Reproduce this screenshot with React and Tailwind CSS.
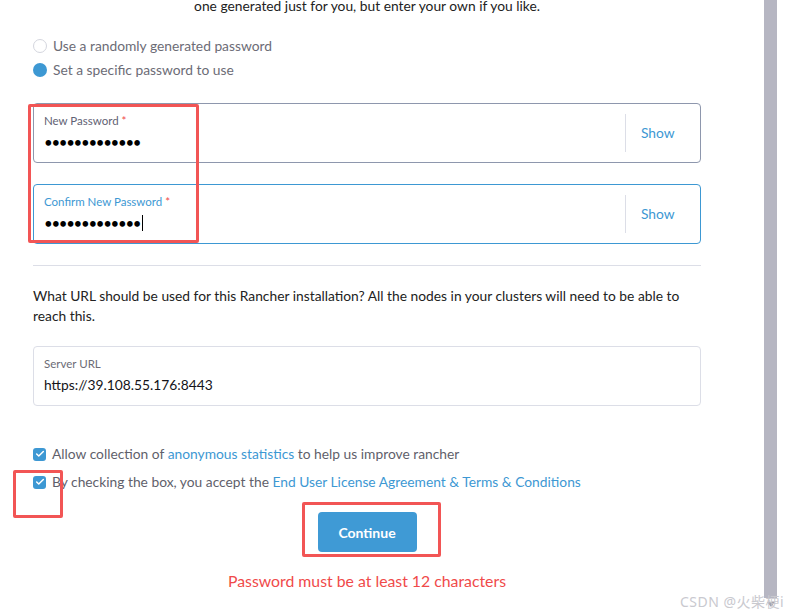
import { Check } from 'lucide-react';

const font = { fontFamily: 'Lato, "Noto Sans", sans-serif' };

function Radio({ checked, label }) {
  return (
    <div className="flex items-center gap-[6px] h-6">
      {checked ? (
        <span className="w-[14px] h-[14px] rounded-full bg-[#3d98d3]" />
      ) : (
        <span className="w-[14px] h-[14px] rounded-full border border-[#d4d6de] bg-white" />
      )}
      <span className="text-[13.8px] text-[#6c6c76]">{label}</span>
    </div>
  );
}

function Checkbox({ children }) {
  return (
    <div className="flex items-center gap-[6px] h-7">
      <span className="w-[13px] h-[13px] rounded-[3px] bg-[#3d98d3] flex items-center justify-center">
        <Check size={10} strokeWidth={3.5} className="text-white" />
      </span>
      <span className="text-[13.8px] text-[#5f5f6b]">{children}</span>
    </div>
  );
}

function PasswordField({ label, focused }) {
  return (
    <div
      className={`h-[60px] rounded-[4px] border flex items-stretch bg-white ${
        focused ? 'border-[#3d98d3]' : 'border-[#8e97ad]'
      }`}
    >
      <div className="flex-1 pl-[10px] pt-[9px] flex flex-col">
        <span className={`text-[11.5px] leading-4 ${focused ? 'text-[#3d98d3]' : 'text-[#5f6273]'}`}>
          {label} <span className="text-[#f04a4a]">*</span>
        </span>
        <div className="flex items-center h-[22px] mt-[2px]">
          <span className="text-[15px] leading-none tracking-[-1.3px] text-black">•••••••••••••</span>
          {focused && <span className="w-px h-[16px] bg-black ml-[2px]" />}
        </div>
      </div>
      <div className="flex items-center py-[10px]">
        <div className="w-px h-full bg-[#dcdee7]" />
        <span className="w-[74px] pl-[15px] text-[13.8px] text-[#3d98d3]">Show</span>
      </div>
    </div>
  );
}

export default function App() {
  return (
    <div className="w-[788px] h-[615px] overflow-hidden relative flex bg-white" style={font}>
      <div className="w-[764px] flex flex-col pl-[33px] pr-[63px]">
        <p className="h-[12px] leading-[12px] text-center text-[13.8px] text-[#222]">
          one generated just for you, but enter your own if you like.
        </p>

        <div className="mt-[22px] flex flex-col">
          <Radio label="Use a randomly generated password" />
          <Radio checked label="Set a specific password to use" />
        </div>

        <div className="mt-[21px] flex flex-col gap-[21px]">
          <PasswordField label="New Password" />
          <PasswordField label="Confirm New Password" focused />
        </div>

        <div className="mt-[21px] h-px bg-[#dcdee7]" />

        <p className="mt-[20px] text-[13.8px] leading-5 text-[#222]">
          What URL should be used for this Rancher installation? All the nodes in your clusters will need to be able to
          reach this.
        </p>

        <div className="mt-[20px] h-[60px] rounded-[4px] border border-[#dcdee7] pl-[10px] pt-[9px] flex flex-col">
          <span className="text-[11.5px] leading-4 text-[#6c6c76]">Server URL</span>
          <span className="mt-[3px] text-[13.8px] leading-5 text-[#141419]">https://39.108.55.176:8443</span>
        </div>

        <div className="mt-[34px] flex flex-col">
          <Checkbox>
            Allow collection of <span className="text-[#3d98d3]">anonymous statistics</span> to help us improve rancher
          </Checkbox>
          <Checkbox>
            By checking the box, you accept the{' '}
            <span className="text-[#3d98d3]">End User License Agreement &amp; Terms &amp; Conditions</span>
          </Checkbox>
        </div>

        <div className="mt-[16px] flex justify-center">
          <button className="w-[99px] h-[40px] rounded-[4px] bg-[#3f9ad5] text-white text-[14px] font-bold">
            Continue
          </button>
        </div>

        <p className="mt-[19px] text-center text-[15.8px] leading-5 text-[#f04a4a]">
          Password must be at least 12 characters
        </p>
      </div>

      <div className="w-[24px] flex flex-col">
        <div className="w-[13px] h-[598px] bg-[#b6b6c2]" />
        <div className="w-[13px] flex justify-center mt-[4px]">
          <span className="w-0 h-0 border-l-[4px] border-r-[4px] border-t-[5px] border-l-transparent border-r-transparent border-t-[#a0a0aa]" />
        </div>
      </div>

      {/* annotation boxes */}
      <div className="absolute left-[28px] top-[104px] w-[171px] h-[139px] border-[3px] border-[#f25555] rounded-[2px]" />
      <div className="absolute left-[13px] top-[470px] w-[50px] h-[48px] border-[3px] border-[#f25555] rounded-[2px]" />
      <div className="absolute left-[302px] top-[502px] w-[139px] h-[55px] border-[3px] border-[#f25555] rounded-[2px]" />

      <span
        className="absolute left-[680px] top-[592px] text-[14px] leading-5 tracking-[0.5px] text-[#c9c9cf]"
        style={{ fontFamily: '"Noto Sans", "Noto Sans CJK SC", sans-serif' }}
      >
        CSDN @火柴梗i
      </span>
    </div>
  );
}
